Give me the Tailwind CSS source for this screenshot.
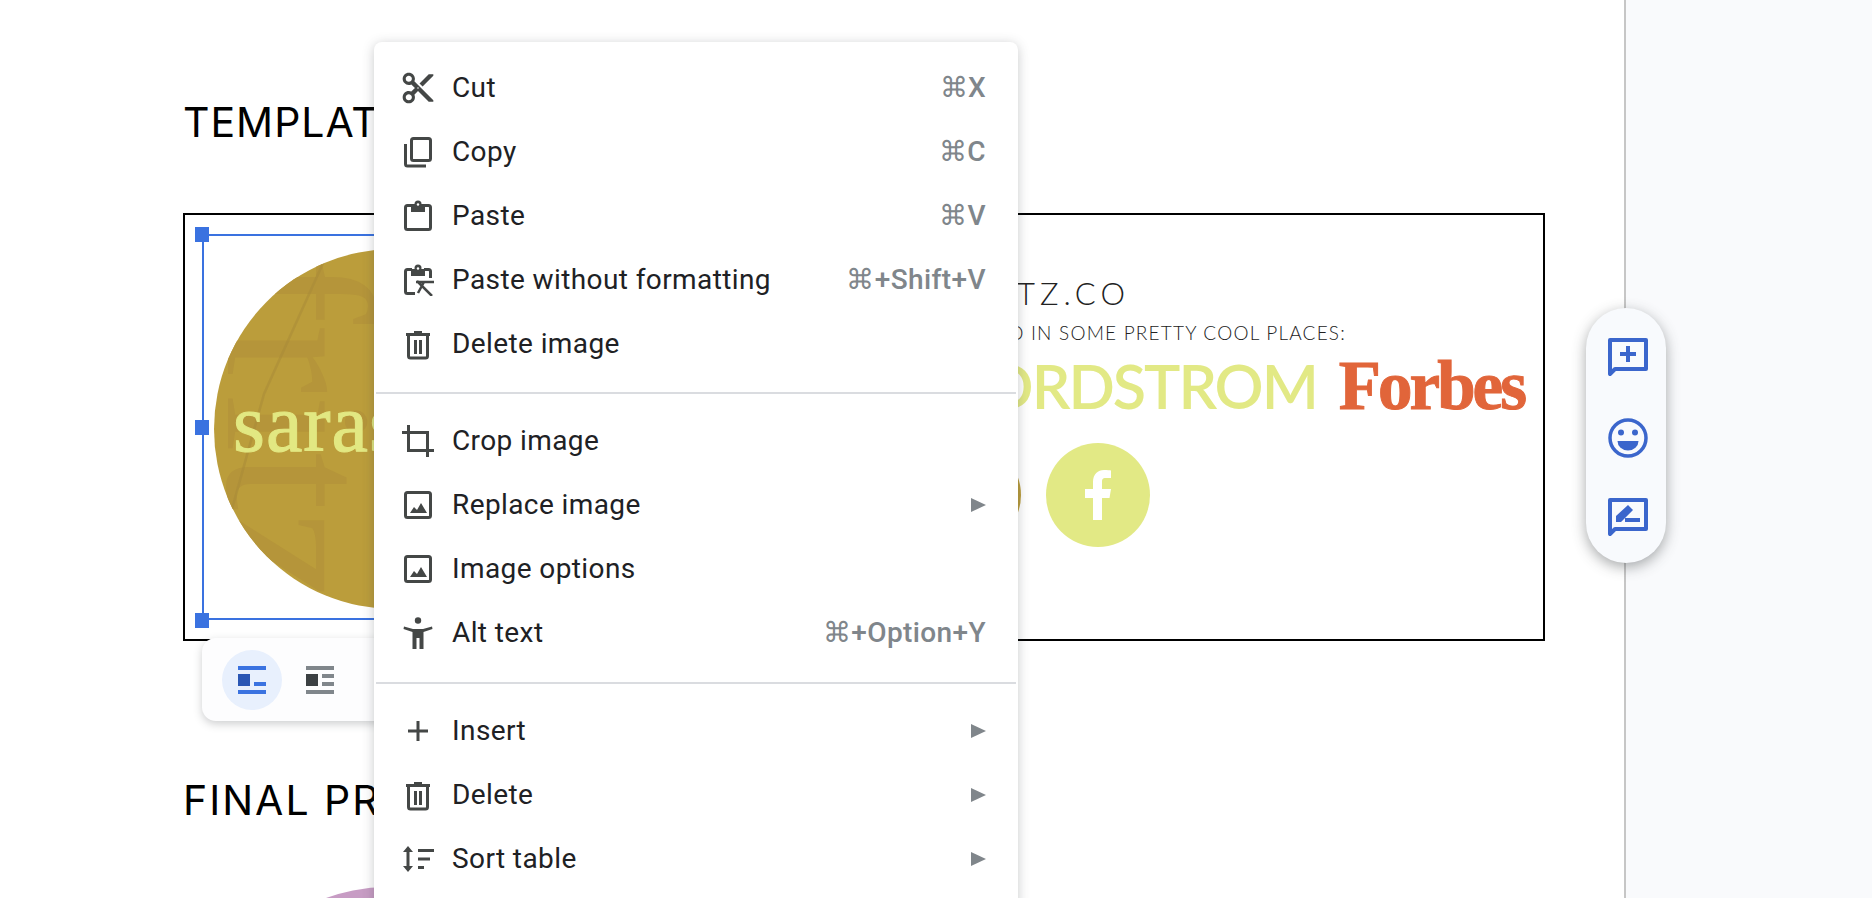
<!DOCTYPE html>
<html lang="en">
<head>
    <meta charset="UTF-8">
    <title>Document context menu</title>
    <script src="https://cdn.jsdelivr.net/npm/@tailwindcss/browser@4"></script>
</head>
<body class="bg-white">
<div class="relative flex w-[1872px] h-[898px] overflow-hidden bg-white font-['Inter',sans-serif]">

    <!-- Document -->
    <div class="w-[1624px] h-full pl-[183px] pt-[97px]">
        <h1 class="text-[41px] leading-[50px] tracking-[1px] text-black">TEMPLATE</h1>

        <div class="flex w-[1362px] h-[428px] mt-[66px] border-2 border-black">
            <!-- selected image -->
            <div class="relative w-[384px] h-[386px] ml-[17px] mt-[19px] border-y-2 border-l-2 border-[#3a72e0] pl-[10px] pt-[13px]">
                <div class="relative w-[360px] h-[360px] rounded-full overflow-hidden bg-[#bb9d3b]">
                    <span class="absolute left-[-90px] top-[125px] rotate-90 font-['Liberation_Serif',serif] text-[210px] leading-[110px] text-[#b5953a]">fritz</span>
                    <span class="absolute left-[90px] top-[125px] rotate-90 font-['Liberation_Serif',serif] text-[190px] leading-[110px] text-[#b5953a]">sara</span>
                    <svg class="absolute left-0 top-0 w-[360px] h-[360px]" viewBox="0 0 360 360">
                        <path d="M18 260 L50 145 L110 12" fill="none" stroke="#a88a38" stroke-width="2.500" opacity="0.5"/>
                    </svg>
                    <span class="absolute left-[19px] top-[134px] font-['Liberation_Serif',serif] text-[82px] leading-[82px] tracking-[1px] [-webkit-text-stroke:1px_#e2e882] text-[#e2e882]">sarasfritz</span>
                </div>
                <div class="absolute left-[-9px] top-[-9px] w-[14px] h-[15px] bg-[#3a72e0]"></div>
                <div class="absolute left-[-9px] top-[184px] w-[14px] h-[15px] bg-[#3a72e0]"></div>
                <div class="absolute left-[-9px] top-[377px] w-[14px] h-[15px] bg-[#3a72e0]"></div>
            </div>

            <!-- signature text -->
            <div class="flex-1 flex flex-col items-end pr-[19px]">
                <div class="mt-[61px] mr-[394px] font-['Lato',sans-serif] font-light text-[31px] leading-[34px] tracking-[5px] text-[#222] whitespace-nowrap">SARASFRITZ.CO</div>
                <div class="mt-[11px] mr-[178px] font-['Lato',sans-serif] font-light text-[19px] leading-[24px] tracking-[1.2px] text-[#222] whitespace-nowrap">I'VE BEEN FEATURED IN SOME PRETTY COOL PLACES:</div>
                <div class="flex items-center mt-[8px] gap-[22px]">
                    <span class="font-['Lato',sans-serif] font-semibold text-[61px] leading-[66px] tracking-[-2px] text-[#e2e985] whitespace-nowrap">NORDSTROM</span>
                    <span class="font-['Liberation_Serif',serif] font-bold text-[69px] leading-[66px] tracking-[-3px] [-webkit-text-stroke:1px_#e1653a] text-[#e1653a]">Forbes</span>
                </div>
                <div class="flex self-start gap-[25px] mt-[24px] ml-[331px]">
                    <div class="w-[104px] h-[104px] rounded-full bg-[#bb9d3b]"></div>
                    <div class="flex items-center justify-center w-[104px] h-[104px] rounded-full bg-[#e2e985]">
                        <svg class="w-[28px] h-[50px]" viewBox="0 0 28 50"><path d="M9 50V28H1v-9h8v-7C9 4 14 0 20 0c3 0 6 .3 7 .5V8h-5c-4 0-4 2-4 4.500V19h9l-1.500 9H18v22z" fill="#fff"/></svg>
                    </div>
                </div>
            </div>
        </div>

        <h1 class="mt-[134px] text-[41px] leading-[50px] tracking-[2px] text-black">FINAL PROOF</h1>
        <div class="w-[360px] h-[360px] mt-[62px] ml-[25px] rounded-full bg-[#c79cc4]"></div>
    </div>

    <!-- Side panel -->
    <div class="flex-1 h-full border-l-2 border-[#c6c6c6] bg-[#f9fafc]"></div>

    <!-- Image wrap toolbar -->
    <div class="absolute left-[202px] top-[638px] flex gap-[8px] w-[300px] h-[83px] pl-[20px] pt-[12px] rounded-[14px] bg-[#fdfdfe] shadow-[0_3px_8px_rgba(60,64,67,0.25)]">
        <div class="flex items-center justify-center w-[60px] h-[60px] rounded-full bg-[#e8f0fd]">
            <svg class="w-[28px] h-[28px]" viewBox="0 0 28 28">
                <rect x="0" y="0" width="28" height="4" fill="#3a72e0"/>
                <rect x="0" y="8" width="12" height="12" fill="#2a56b4"/>
                <rect x="16" y="16" width="12" height="4" fill="#3a72e0"/>
                <rect x="0" y="24" width="28" height="4" fill="#3a72e0"/>
            </svg>
        </div>
        <div class="flex items-center justify-center w-[60px] h-[60px]">
            <svg class="w-[28px] h-[28px]" viewBox="0 0 28 28">
                <rect x="0" y="0" width="28" height="4" fill="#80868b"/>
                <rect x="0" y="8" width="12" height="12" fill="#3c4043"/>
                <rect x="16" y="8" width="12" height="4" fill="#80868b"/>
                <rect x="16" y="16" width="12" height="4" fill="#80868b"/>
                <rect x="0" y="24" width="28" height="4" fill="#80868b"/>
            </svg>
        </div>
    </div>

    <!-- Context menu -->
    <div class="absolute left-[374px] top-[42px] w-[644px] h-[900px] pt-[14px] rounded-[8px] bg-white shadow-[0_2px_12px_rgba(60,64,67,0.28)] font-['Roboto',sans-serif] text-[28px] tracking-[0.4px] text-[#202124]">
        <div class="flex items-center h-16 pl-[28px] pr-[32px]">
            <svg class="w-8 h-8 mr-[18px]" viewBox="0 0 24 24" fill="#444746"><path transform="translate(-1.800 -1.800) scale(1.150)" d="M9.640 7.640c.23-.5.360-1.050.360-1.640 0-2.210-1.790-4-4-4S2 3.790 2 6s1.790 4 4 4c.590 0 1.140-.130 1.640-.360L10 12l-2.360 2.360C7.140 14.130 6.590 14 6 14c-2.210 0-4 1.790-4 4s1.790 4 4 4 4-1.790 4-4c0-.590-.130-1.140-.360-1.640L12 14l7 7h3v-1L9.640 7.640zM6 8c-1.100 0-2-.890-2-2s.9-2 2-2 2 .890 2 2-.9 2-2 2zm0 12c-1.100 0-2-.890-2-2s.9-2 2-2 2 .890 2 2-.9 2-2 2zm6-7.500c-.280 0-.5-.220-.5-.5s.220-.5.5-.5.5.220.5.5-.220.5-.5.5zM19 3l-6 6 2 2 7-7V3h-3z"/></svg>
            <span class="flex-1">Cut</span>
            <span class="font-medium text-[#80868b]">⌘X</span>
        </div>
        <div class="flex items-center h-16 pl-[28px] pr-[32px]">
            <svg class="w-8 h-8 mr-[18px]" viewBox="0 0 32 32" fill="none" stroke="#444746" stroke-width="3"><rect x="9.500" y="2.500" width="19" height="22" rx="2"/><path d="M3.500 8v20a2 2 0 0 0 2 2H24"/></svg>
            <span class="flex-1">Copy</span>
            <span class="font-medium text-[#80868b]">⌘C</span>
        </div>
        <div class="flex items-center h-16 pl-[28px] pr-[32px]">
            <svg class="w-8 h-8 mr-[18px]" viewBox="0 0 32 32"><rect x="3.500" y="5.500" width="25" height="24" rx="2" fill="none" stroke="#444746" stroke-width="3"/><rect x="9" y="5" width="14" height="7" fill="#444746"/><circle cx="16" cy="4" r="3.500" fill="#444746"/><circle cx="16" cy="4.500" r="1.200" fill="#fff"/></svg>
            <span class="flex-1">Paste</span>
            <span class="font-medium text-[#80868b]">⌘V</span>
        </div>
        <div class="flex items-center h-16 pl-[28px] pr-[32px]">
            <svg class="w-8 h-8 mr-[18px]" viewBox="0 0 32 32"><path d="M10 5.500H5.500a2 2 0 0 0-2 2v20a2 2 0 0 0 2 2H13M22 5.500h4.500a2 2 0 0 1 2 2V14" fill="none" stroke="#444746" stroke-width="3"/><rect x="9" y="5" width="14" height="7" fill="#444746"/><circle cx="16" cy="4" r="3.500" fill="#444746"/><circle cx="16" cy="4.500" r="1.200" fill="#fff"/><path d="M14 18H32M15 17L30 32M22 18L16 29" fill="none" stroke="#444746" stroke-width="2.500"/></svg>
            <span class="flex-1">Paste without formatting</span>
            <span class="font-medium text-[#80868b]">⌘+Shift+V</span>
        </div>
        <div class="flex items-center h-16 pl-[28px] pr-[32px]">
            <svg class="w-8 h-8 mr-[18px]" viewBox="0 0 32 32"><path d="M6.500 8v20a2 2 0 0 0 2 2h15a2 2 0 0 0 2-2V8" fill="none" stroke="#444746" stroke-width="3"/><path d="M4 5h8V3h8v2h8v3H4zM12 12h3v14h-3zM17 12h3v14h-3z" fill="#444746"/></svg>
            <span class="flex-1">Delete image</span>
        </div>

        <div class="h-[2px] mx-[2px] mt-[16px] mb-[15px] bg-[#dadce0]"></div>

        <div class="flex items-center h-16 pl-[28px] pr-[32px]">
            <svg class="w-8 h-8 mr-[18px]" viewBox="0 0 32 32" fill="none" stroke="#444746" stroke-width="3"><path d="M0 7.500H25.500V32M6.500 0V25.500H32"/></svg>
            <span class="flex-1">Crop image</span>
        </div>
        <div class="flex items-center h-16 pl-[28px] pr-[32px]">
            <svg class="w-8 h-8 mr-[18px]" viewBox="0 0 32 32"><rect x="3.500" y="3.500" width="25" height="25" rx="2" fill="none" stroke="#444746" stroke-width="3"/><path d="M8 24l4-6 3 3 4-7 6 10z" fill="#444746"/></svg>
            <span class="flex-1">Replace image</span>
            <svg class="w-[15px] h-[14px]" viewBox="0 0 15 14"><path d="M0 0L15 7L0 14z" fill="#80868b"/></svg>
        </div>
        <div class="flex items-center h-16 pl-[28px] pr-[32px]">
            <svg class="w-8 h-8 mr-[18px]" viewBox="0 0 32 32"><rect x="3.500" y="3.500" width="25" height="25" rx="2" fill="none" stroke="#444746" stroke-width="3"/><path d="M8 24l4-6 3 3 4-7 6 10z" fill="#444746"/></svg>
            <span class="flex-1">Image options</span>
        </div>
        <div class="flex items-center h-16 pl-[28px] pr-[32px]">
            <svg class="w-8 h-8 mr-[18px]" viewBox="0 0 32 32"><circle cx="16" cy="3.500" r="3.200" fill="#444746"/><path d="M2 9.500L11 12H21L30 9.500L30.500 12L21.500 15V32H17.500V21H14.500V32H10.500V15L1.500 12z" fill="#444746"/></svg>
            <span class="flex-1">Alt text</span>
            <span class="font-medium text-[#80868b]">⌘+Option+Y</span>
        </div>

        <div class="h-[2px] mx-[2px] mt-[17px] mb-[15px] bg-[#dadce0]"></div>

        <div class="flex items-center h-16 pl-[28px] pr-[32px]">
            <svg class="w-8 h-8 mr-[18px]" viewBox="0 0 32 32" fill="none" stroke="#444746" stroke-width="3"><path d="M6 16H26M16 6V26"/></svg>
            <span class="flex-1">Insert</span>
            <svg class="w-[15px] h-[14px]" viewBox="0 0 15 14"><path d="M0 0L15 7L0 14z" fill="#80868b"/></svg>
        </div>
        <div class="flex items-center h-16 pl-[28px] pr-[32px]">
            <svg class="w-8 h-8 mr-[18px]" viewBox="0 0 32 32"><path d="M6.500 8v20a2 2 0 0 0 2 2h15a2 2 0 0 0 2-2V8" fill="none" stroke="#444746" stroke-width="3"/><path d="M4 5h8V3h8v2h8v3H4zM12 12h3v14h-3zM17 12h3v14h-3z" fill="#444746"/></svg>
            <span class="flex-1">Delete</span>
            <svg class="w-[15px] h-[14px]" viewBox="0 0 15 14"><path d="M0 0L15 7L0 14z" fill="#80868b"/></svg>
        </div>
        <div class="flex items-center h-16 pl-[28px] pr-[32px]">
            <svg class="w-8 h-8 mr-[18px]" viewBox="0 0 32 32"><path d="M6 3L1 9H4.500V23H1L6 29L11 23H7.500V9H11z" fill="#444746"/><path d="M16 6h16v3H16zM16 14.500h12v3H16zM16 23h6v3h-6z" fill="#444746"/></svg>
            <span class="flex-1">Sort table</span>
            <svg class="w-[15px] h-[14px]" viewBox="0 0 15 14"><path d="M0 0L15 7L0 14z" fill="#80868b"/></svg>
        </div>
    </div>

    <!-- Floating comment actions -->
    <div class="absolute left-[1586px] top-[308px] flex flex-col items-center gap-[40px] w-[80px] h-[255px] pt-[30px] pl-[4px] rounded-full bg-[#f8fafd] shadow-[0_4px_14px_rgba(60,64,67,0.45)]">
        <svg class="w-10 h-10" viewBox="0 0 40 40"><path d="M2 2H38V31H7L2 36z" fill="none" stroke="#3b66cc" stroke-width="4" stroke-linejoin="round"/><path d="M20 8V24M12 16H28" fill="none" stroke="#3b66cc" stroke-width="4"/></svg>
        <svg class="w-10 h-10" viewBox="0 0 40 40"><circle cx="20" cy="20" r="18" fill="none" stroke="#3b66cc" stroke-width="3.500"/><circle cx="13" cy="14.500" r="3" fill="#3b66cc"/><circle cx="27" cy="14.500" r="3" fill="#3b66cc"/><path d="M9.500 23H30.500A10.500 9.500 0 0 1 9.500 23z" fill="#3b66cc"/></svg>
        <svg class="w-10 h-10" viewBox="0 0 40 40"><path d="M2 2H38V31H7L2 36z" fill="none" stroke="#3b66cc" stroke-width="4" stroke-linejoin="round"/><path d="M8 24V18L20 7L25 12L13 24zM17 20H32V24H17z" fill="#3b66cc"/></svg>
    </div>
</div>
</body>
</html>
